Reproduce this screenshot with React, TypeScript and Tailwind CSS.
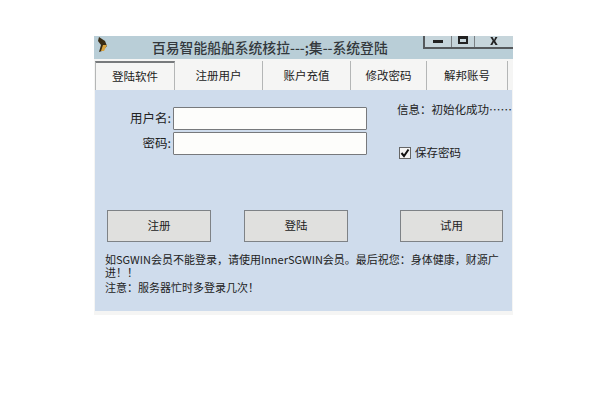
const FONT = "font-['Noto_Sans_CJK_SC','Liberation_Sans',sans-serif]";

const TABS = [
  { label: '登陆软件', width: 'w-[80px]', active: true },
  { label: '注册用户', width: 'w-[88px]', active: false },
  { label: '账户充值', width: 'w-[88px]', active: false },
  { label: '修改密码', width: 'w-[76px]', active: false },
  { label: '解邦账号', width: 'w-[81px]', active: false },
];

function Field({ label }: { label: string }) {
  return (
    <div className="flex items-center h-[23px]">
      <span className="w-[76px] text-right text-[12.5px] leading-none text-[#222]">{label}:</span>
      <div className="ml-[2px] w-[194px] h-[23px] bg-[#fdfdfb] border border-[#77797c] rounded-[1px]" />
    </div>
  );
}

function WinButton({ label, width }: { label: string; width: string }) {
  return (
    <div className={`${width} h-[32px] flex items-center justify-center bg-[#e0e0de] border border-[#7e8286] text-[11.5px] text-[#222]`}>
      {label}
    </div>
  );
}

export default function App() {
  return (
    <div className={`w-[594px] h-[402px] bg-white pt-[36px] pl-[94px] ${FONT}`}>
      <div className="w-[419px] h-[279px] flex flex-col bg-[#f5f5f4] blur-[0.5px]">
        {/* Title bar */}
        <div className="relative h-[23px] shrink-0 bg-[#b9ced7] flex items-center pl-[58px]">
          <svg className="absolute left-[2px] top-[1px]" width="14" height="16" viewBox="0 0 14 16">
            <path d="M3 0 L9 4 L11 9 L6 14 L3 15 L5 8 L2 4 Z" fill="#3a2c14" />
            <path d="M7 8 L11 8 L8 14 L5 14 Z" fill="#d9a441" />
          </svg>
          <span className="text-[13.8px] leading-none font-medium text-[#33383c] whitespace-nowrap">百易智能船舶系统核拉---;集--系统登陆</span>
          <div className="absolute right-0 top-0 flex h-[13px] border-l-2 border-b-2 border-[#55595c] bg-[#c6d5db]">
            <div className="w-[27px] flex items-center justify-center border-r border-[#7a8084]">
              <div className="w-[10px] h-[3px] bg-[#222]" />
            </div>
            <div className="w-[23px] flex items-start justify-center border-r border-[#7a8084]">
              <div className="w-[10px] h-[8px] border-2 border-[#222] border-t-[3px]" />
            </div>
            <div className="w-[38px] flex items-start justify-center text-[14px] leading-[7px] font-bold text-[#222]">x</div>
          </div>
        </div>

        {/* Tabs */}
        <div className="h-[31px] shrink-0 flex items-end pl-[1px] bg-[#f5f5f4]">
          {TABS.map((tab) => (
            <div
              key={tab.label}
              className={`${tab.width} h-[29px] flex items-center justify-center text-[11.5px] text-[#222] border-r border-[#b4b6b6] ${
                tab.active ? 'border-t-2 border-t-[#777a7c] border-l border-l-[#b4b6b6]' : ''
              }`}
            >
              {tab.label}
            </div>
          ))}
        </div>

        {/* Panel */}
        <div className="flex-1 mx-[1px] mb-[4px] bg-[#cfdcec] flex flex-col">
          <div className="flex pt-[17px] h-[120px]">
            <div className="flex flex-col gap-[2px] w-[302px]">
              <Field label="用户名" />
              <Field label="密码" />
            </div>
            <div className="flex flex-col text-[11.5px] leading-none text-[#222]">
              <span className="whitespace-nowrap mt-[-3px]">信息：初始化成功……</span>
              <div className="flex items-center gap-[4px] mt-[31px] ml-[2px]">
                <div className="w-[12px] h-[12px] bg-[#f4f4f4] border border-[#666] flex items-center justify-center">
                  <svg width="10" height="10" viewBox="0 0 10 10">
                    <path d="M1.5 5 L4 8 L8.5 1.5" fill="none" stroke="#111" strokeWidth="2" />
                  </svg>
                </div>
                <span>保存密码</span>
              </div>
            </div>
          </div>
          <div className="flex pl-[12px] gap-[33px]">
            <WinButton label="注册" width="w-[104px]" />
            <WinButton label="登陆" width="w-[104px]" />
            <div className="ml-[19px]">
              <WinButton label="试用" width="w-[103px]" />
            </div>
          </div>
          <div className="mt-[11px] pl-[10px] pr-[10px] text-[11px] leading-[13px] text-[#222]">
            <p>如SGWIN会员不能登录，请使用InnerSGWIN会员。最后祝您：身体健康，财源广进！！</p>
            <p className="mt-[2px]">注意：服务器忙时多登录几次！</p>
          </div>
        </div>
      </div>
    </div>
  );
}
